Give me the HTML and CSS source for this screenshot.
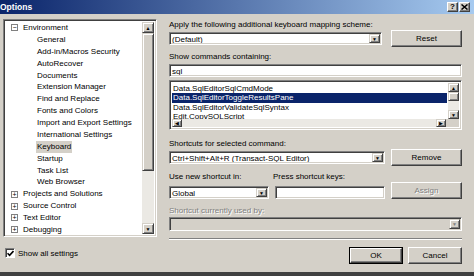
FILE: index.html
```html
<!DOCTYPE html>
<html lang="en">
<head>
    <meta charset="UTF-8">
    <title>Options</title>
    <link rel="stylesheet" href="styles.css">
</head>
<body>
    <div class="window">
        <div class="titlebar">
            <span class="title">Options</span>
            <div class="caption-btns">
                <span class="cap-btn">?</span>
                <span class="cap-btn close">
                    <svg width="7" height="6" viewBox="0 0 7 6"><path d="M0.5 0.5L6.5 5.5M6.5 0.5L0.5 5.5" stroke="#000" stroke-width="1.5"/></svg>
                </span>
            </div>
        </div>

        <div class="main">
            <div class="left">
                <div class="tree sunken">
                    <div class="tree-items">
                        <div class="node root"><span class="expander">&minus;</span>Environment</div>
                        <div class="node child">General</div>
                        <div class="node child">Add-in/Macros Security</div>
                        <div class="node child">AutoRecover</div>
                        <div class="node child">Documents</div>
                        <div class="node child">Extension Manager</div>
                        <div class="node child">Find and Replace</div>
                        <div class="node child">Fonts and Colors</div>
                        <div class="node child">Import and Export Settings</div>
                        <div class="node child">International Settings</div>
                        <div class="node child"><span class="selected-node">Keyboard</span></div>
                        <div class="node child">Startup</div>
                        <div class="node child">Task List</div>
                        <div class="node child">Web Browser</div>
                        <div class="node root"><span class="expander">+</span>Projects and Solutions</div>
                        <div class="node root"><span class="expander">+</span>Source Control</div>
                        <div class="node root"><span class="expander">+</span>Text Editor</div>
                        <div class="node root"><span class="expander">+</span>Debugging</div>
                    </div>
                    <div class="vscroll tree-scroll">
                        <span class="arrow-btn">&#9650;</span>
                        <span class="thumb tall"></span>
                        <span class="track"></span>
                        <span class="arrow-btn">&#9660;</span>
                    </div>
                </div>
                <div class="check-row">
                    <span class="checkbox">
                        <svg width="7" height="7" viewBox="0 0 7 7"><path d="M0.5 3.2L2.6 5.4L6.5 1" fill="none" stroke="#000" stroke-width="1.6"/></svg>
                    </span>
                    <span>Show all settings</span>
                </div>
            </div>

            <div class="right">
                <div class="label first">Apply the following additional keyboard mapping scheme:</div>
                <div class="row">
                    <div class="combo sunken w-scheme"><span class="value">(Default)</span><span class="arrow-btn">&#9660;</span></div>
                    <div class="btn">Reset</div>
                </div>

                <div class="label gap-5">Show commands containing:</div>
                <div class="field sunken sql"><span class="value">sql</span></div>

                <div class="listbox sunken">
                    <div class="list-top">
                        <div class="list-items">
                            <div class="item">Data.SqlEditorSqlCmdMode</div>
                            <div class="item active">Data.SqlEditorToggleResultsPane</div>
                            <div class="item">Data.SqlEditorValidateSqlSyntax</div>
                            <div class="item">Edit.CopySQLScript</div>
                        </div>
                        <div class="vscroll list-scroll">
                            <span class="arrow-btn">&#9650;</span>
                            <span class="thumb short"></span>
                            <span class="track"></span>
                            <span class="arrow-btn">&#9660;</span>
                        </div>
                    </div>
                    <div class="hscroll">
                        <span class="arrow-btn">&#9664;</span>
                        <span class="track"></span>
                        <span class="arrow-btn">&#9654;</span>
                        <span class="corner"></span>
                    </div>
                </div>

                <div class="label gap-9">Shortcuts for selected command:</div>
                <div class="row">
                    <div class="combo sunken w-shortcut"><span class="value">Ctrl+Shift+Alt+R (Transact-SQL Editor)</span><span class="arrow-btn">&#9660;</span></div>
                    <div class="btn">Remove</div>
                </div>

                <div class="label-row">
                    <span class="label scope-label">Use new shortcut in:</span>
                    <span class="label">Press shortcut keys:</span>
                </div>
                <div class="row bottom">
                    <div class="combo sunken w-scope"><span class="value">Global</span><span class="arrow-btn">&#9660;</span></div>
                    <div class="field sunken w-keys"></div>
                    <div class="btn disabled">Assign</div>
                </div>

                <div class="label disabled gap-7">Shortcut currently used by:</div>
                <div class="combo sunken disabled-combo"><span class="value"></span><span class="arrow-btn grey">&#9660;</span></div>

                <div class="separator"></div>

                <div class="dialog-btns">
                    <div class="btn default">OK</div>
                    <div class="btn">Cancel</div>
                </div>
            </div>
        </div>
    </div>
</body>
</html>
```

FILE: styles.css
```css
body {
    margin: 0;
    background-color: #d4d0c8;
    font-family: "Liberation Sans", Arial, sans-serif;
    font-size: 8px;
    color: #000000;
}
.window {
    width: 474px;
    height: 276px;
    background-color: #d4d0c8;
    border-bottom: 4px solid #404040;
    box-sizing: border-box;
    overflow: hidden;
}

/* barre de titre */
.titlebar {
    height: 14px;
    background: linear-gradient(to right, #0a246a, #a6caf0);
    display: flex;
    align-items: center;
    justify-content: space-between;
}
.title {
    color: #ffffff;
    font-weight: bold;
    font-size: 8.5px;
}
.caption-btns {
    display: flex;
    gap: 1px;
    padding-right: 4px;
}
.cap-btn {
    width: 11px;
    height: 10px;
    box-sizing: border-box;
    background-color: #d4d0c8;
    border: 1px solid;
    border-color: #ffffff #404040 #404040 #ffffff;
    box-shadow: inset -1px -1px #808080;
    display: flex;
    align-items: center;
    justify-content: center;
    font-weight: bold;
    font-size: 8px;
    line-height: 1;
}

/* bordures 3D */
.sunken {
    border: 1px solid;
    border-color: #808080 #ffffff #ffffff #808080;
    box-shadow: inset 1px 1px #404040, inset -1px -1px #d4d0c8;
    background-color: #ffffff;
    box-sizing: border-box;
}
.btn {
    width: 71px;
    height: 17px;
    box-sizing: border-box;
    border: 1px solid;
    border-color: #ffffff #404040 #404040 #ffffff;
    box-shadow: inset -1px -1px #808080;
    display: flex;
    align-items: center;
    justify-content: center;
}
.btn.disabled {
    color: #808080;
    text-shadow: 1px 1px #ffffff;
}
.btn.default {
    outline: 1px solid #000000;
    outline-offset: -1px;
    border-width: 2px;
    box-shadow: inset -1px -1px #808080;
}
.arrow-btn {
    width: 11px;
    flex: none;
    box-sizing: border-box;
    background-color: #d4d0c8;
    border: 1px solid;
    border-color: #d4d0c8 #404040 #404040 #d4d0c8;
    box-shadow: inset 1px 1px #ffffff, inset -1px -1px #808080;
    font-size: 5px;
    display: flex;
    align-items: center;
    justify-content: center;
}
.arrow-btn.grey {
    color: #808080;
}

/* mise en page */
.main {
    display: flex;
    padding-left: 3px;
    gap: 12px;
}
.left {
    width: 154px;
    display: flex;
    flex-direction: column;
}
.right {
    width: 293px;
    display: flex;
    flex-direction: column;
}

/* arbre */
.tree {
    margin-top: 5px;
    height: 218px;
    display: flex;
    padding: 2px;
}
.tree-items {
    flex: 1;
    overflow: hidden;
}
.node {
    height: 11.875px;
    line-height: 11.875px;
    white-space: nowrap;
    display: flex;
    align-items: center;
}
.node.root {
    padding-left: 5px;
}
.node.child {
    padding-left: 31px;
}
.expander {
    width: 7px;
    height: 7px;
    box-sizing: border-box;
    border: 1px solid #808080;
    margin-right: 5px;
    font-size: 7px;
    line-height: 5px;
    text-align: center;
}
.selected-node {
    background-color: #d4d0c8;
    padding: 0 1px;
    margin-left: -1px;
}
.vscroll {
    width: 12px;
    display: flex;
    flex-direction: column;
}
.vscroll .arrow-btn {
    height: 11px;
    width: 100%;
}
.track {
    flex: 1;
    background-color: #ebe9e4;
}
.thumb {
    background-color: #d4d0c8;
    box-sizing: border-box;
    border: 1px solid;
    border-color: #d4d0c8 #404040 #404040 #d4d0c8;
    box-shadow: inset 1px 1px #ffffff, inset -1px -1px #808080;
}
.thumb.tall {
    height: 138px;
}
.check-row {
    display: flex;
    align-items: center;
    gap: 3px;
    margin-top: 11px;
    padding-left: 2px;
}
.checkbox {
    width: 10px;
    height: 10px;
    box-sizing: border-box;
    border: 1px solid;
    border-color: #808080 #ffffff #ffffff #808080;
    box-shadow: inset 1px 1px #404040;
    background-color: #ffffff;
    display: flex;
    align-items: center;
    justify-content: center;
}

/* panneau de droite */
.label {
    height: 10px;
    line-height: 10px;
    white-space: nowrap;
}
.label.first {
    margin-top: 6px;
}
.label.disabled {
    color: #808080;
    text-shadow: 1px 1px #ffffff;
}
.gap-5 { margin-top: 5px; }
.gap-7 { margin-top: 7px; }
.gap-9 { margin-top: 9px; }
.row {
    display: flex;
    align-items: center;
    justify-content: space-between;
    height: 17px;
}
.row.bottom {
    align-items: flex-end;
    justify-content: flex-start;
}
.row.bottom .btn {
    margin-left: auto;
}
.combo, .field {
    height: 13px;
    display: flex;
    padding: 1px;
}
.value {
    flex: 1;
    padding-left: 1px;
    line-height: 11px;
    white-space: nowrap;
    overflow: hidden;
}
.w-scheme { width: 213px; }
.w-shortcut { width: 216px; }
.w-scope { width: 100px; }
.w-keys { width: 110px; margin-left: 6px; }
.sql {
    margin-top: 2px;
}
.disabled-combo {
    margin-top: 1px;
    height: 14px;
    background-color: #d4d0c8;
}

.listbox {
    margin-top: 3px;
    height: 50px;
    padding: 2px;
    display: flex;
    flex-direction: column;
}
.list-top {
    flex: 1;
    display: flex;
    overflow: hidden;
}
.list-items {
    flex: 1;
    padding-top: 0.5px;
    overflow: hidden;
}
.item {
    height: 9.5px;
    line-height: 9.5px;
    padding-left: 1px;
    margin-right: 1px;
    white-space: nowrap;
}
.item.active {
    background-color: #0a246a;
    color: #ffffff;
}
.list-scroll {
    width: 11px;
}
.list-scroll .arrow-btn {
    height: 9px;
}
.thumb.short {
    height: 9px;
}
.hscroll {
    height: 8px;
    display: flex;
}
.hscroll .arrow-btn {
    width: 10px;
}
.corner {
    width: 13px;
    background-color: #d4d0c8;
}

.label-row {
    display: flex;
    margin-top: 6px;
}
.scope-label {
    width: 104px;
}
.separator {
    margin-top: 7px;
    height: 0;
    border-top: 1px solid #808080;
    border-bottom: 1px solid #ffffff;
}
.dialog-btns {
    display: flex;
    justify-content: flex-end;
    gap: 5px;
    margin-top: 7px;
}
.dialog-btns .btn {
    width: 54px;
}
```
